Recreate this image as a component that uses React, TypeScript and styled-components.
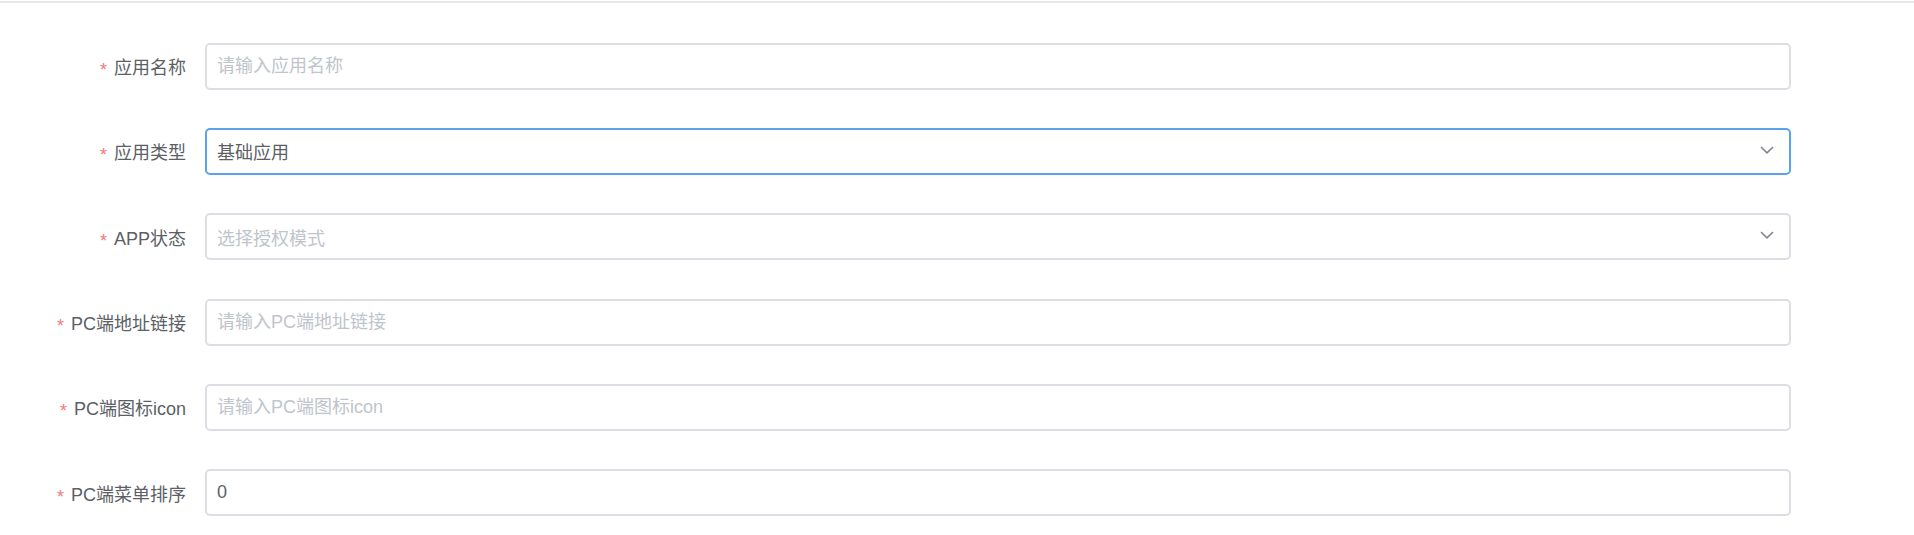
import React, { FC } from 'react'
import styled, { createGlobalStyle } from 'styled-components'

type TField = {
	label: string
	placeholder?: string
	value?: string
	select?: boolean
	active?: boolean
}

const fields: TField[] = [
	{ label: '应用名称', placeholder: '请输入应用名称' },
	{ label: '应用类型', value: '基础应用', select: true, active: true },
	{ label: 'APP状态', placeholder: '选择授权模式', select: true },
	{ label: 'PC端地址链接', placeholder: '请输入PC端地址链接' },
	{ label: 'PC端图标icon', placeholder: '请输入PC端图标icon' },
	{ label: 'PC端菜单排序', value: '0' },
]

const Chevron: FC = () => (
	<ArrowIcon viewBox='0 0 14 8' width='14' height='8'>
		<path d='M1 1 L7 6.8 L13 1' fill='none' stroke='#80848b' strokeWidth='1.6' />
	</ArrowIcon>
)

const App: FC = () => (
	<>
		<GlobalStyle />
		<Page>
			<Form>
				{fields.map(field => (
					<Row key={field.label}>
						<Label>
							<Star>*</Star>
							{field.label}
						</Label>
						<Control>
							<Box $active={!!field.active}>
								{field.select ? (
									<>
										<Value $placeholder={!field.value}>{field.value || field.placeholder}</Value>
										<Chevron />
									</>
								) : (
									<Input readOnly placeholder={field.placeholder} defaultValue={field.value} />
								)}
							</Box>
						</Control>
					</Row>
				))}
			</Form>
		</Page>
	</>
)

export default App

const GlobalStyle = createGlobalStyle`
	body {
		margin: 0;
		background: #fff;
		font-family: 'Liberation Sans', 'Noto Sans CJK SC', sans-serif;
	}
`
const Page = styled.div`
	margin-top: 1px;
	border-top: 2px solid #e6e6e8;
`
const Form = styled.div`
	display: flex;
	flex-direction: column;
	gap: 38.3px;
	padding: 39.7px 123px 0 0;
`
const Row = styled.div`
	display: flex;
	align-items: center;
	height: 47px;
`
const Label = styled.div`
	width: 205px;
	box-sizing: border-box;
	padding-right: 19px;
	text-align: right;
	font-size: 18px;
	color: #5c5f66;
	white-space: nowrap;
`
const Star = styled.span`
	display: inline-block;
	color: #f47a7a;
	margin-right: 7px;
	transform: translateY(2px);
`
const Control = styled.div`
	flex: 1;
	height: 100%;
`
const Box = styled.div<{ $active: boolean }>`
	display: flex;
	align-items: center;
	height: 100%;
	box-sizing: border-box;
	padding: 0 15px 0 10px;
	border: 2px solid ${props => (props.$active ? '#5aa2ee' : '#dcdee3')};
	border-radius: 5px;
	background: #fff;
`
const Input = styled.input`
	flex: 1;
	border: none;
	outline: none;
	padding: 0;
	background: transparent;
	font-family: inherit;
	font-size: 18px;
	color: #5c5f66;
	&::placeholder {
		color: #c0c4cc;
	}
`
const Value = styled.span<{ $placeholder: boolean }>`
	flex: 1;
	font-size: 18px;
	color: ${props => (props.$placeholder ? '#c0c4cc' : '#5c5f66')};
`
const ArrowIcon = styled.svg`
	flex: none;
	margin-top: -3px;
`
